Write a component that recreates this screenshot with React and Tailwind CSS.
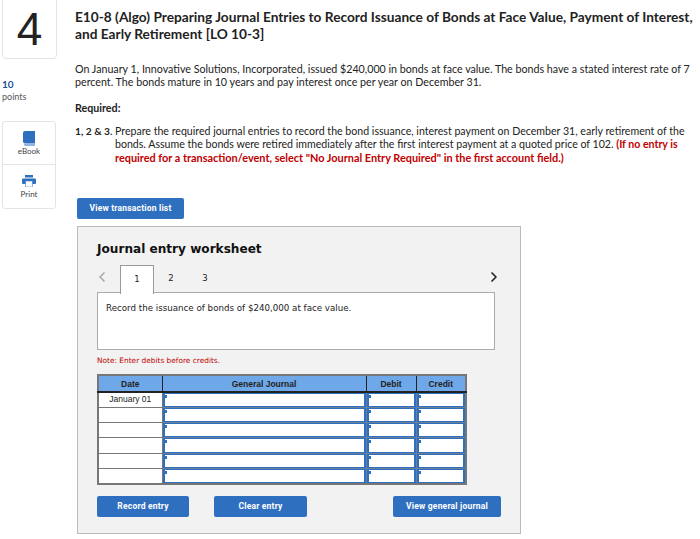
import React from 'react';
import { ChevronLeft, ChevronRight } from 'lucide-react';

const body = "font-['Lato','Open_Sans',sans-serif]";
const verdana = "font-['DejaVu_Sans',sans-serif]";

// ── Small blue action button ──────────────────────────────────────────────────
const ActionButton = ({ width, children }) => (
  <button className={`block ${width} h-[21px] bg-[#2f6fbf] rounded-[2px] text-white text-[8.5px] tracking-[0.2px] font-bold font-['Roboto',sans-serif]`}>
    {children}
  </button>
);

// ── Entry cell with corner marker ─────────────────────────────────────────────
const EntryCell = () => (
  <td className="relative p-0 bg-white border border-[#6b7f99] shadow-[inset_2px_0_0_#2f6fbf,inset_-2px_0_0_#2f6fbf,inset_0_1px_0_#2f6fbf,inset_0_-1px_0_#2f6fbf]">
    <span className="absolute left-[1px] top-[2px] w-[3px] h-[3px] bg-[#2f6fbf]" />
  </td>
);

const rows = [
  { date: 'January 01', height: 'h-[15px]' },
  { date: '', height: 'h-[15px]' },
  { date: '', height: 'h-[15px]' },
  { date: '', height: 'h-[16px]' },
  { date: '', height: 'h-[15px]' },
  { date: '', height: 'h-[16px]' },
];

const App = () => {
  return (
    <div className={`flex w-[700px] h-[539px] overflow-hidden bg-white text-[#222] ${body}`}>
      {/* ── Left rail ── */}
      <div className="w-[75px] shrink-0 pl-[2px]">
        <div className="w-[55px] h-[60px] -mt-[1px] border border-[#e4e4e4] rounded-b-[4px] flex items-center justify-center text-[#222] text-[46px] leading-none font-['Liberation_Sans',sans-serif]">
          4
        </div>
        <p className="mt-[19px] text-[10px] leading-[12px] font-bold text-[#1d4f91]">10</p>
        <p className="text-[9px] leading-[12px] text-[#555] mt-[1px]">points</p>
        <div className="mt-[18px] w-[54px] border border-[#e4e4e4] rounded-[3px]">
          <div className="h-[43px] flex flex-col items-center pt-[9px] border-b border-[#e4e4e4]">
            <svg width="12" height="15" viewBox="0 0 12 15">
              <path d="M2 0h10v12.5H2a2 2 0 0 1-2-2V2a2 2 0 0 1 2-2z" fill="#2f6fbf" />
              <path d="M1 13h11v2H2.5A1.5 1.5 0 0 1 1 13.5z" fill="#8fb5e3" />
            </svg>
            <span className="text-[8px] leading-[10px] text-[#444]">eBook</span>
          </div>
          <div className="h-[43px] flex flex-col items-center pt-[10px]">
            <svg width="14" height="12" viewBox="0 0 14 12">
              <rect x="3" y="0" width="8" height="2.5" fill="#2f6fbf" />
              <rect x="0" y="3.5" width="14" height="5.5" rx="1" fill="#2f6fbf" />
              <rect x="3.5" y="6" width="7" height="6" fill="#fff" stroke="#2f6fbf" strokeWidth="0.5" />
            </svg>
            <span className="text-[8px] leading-[10px] mt-[2px] text-[#444]">Print</span>
          </div>
        </div>
      </div>

      {/* ── Main content ── */}
      <div className="w-[625px] shrink-0">
        <h1 className="mt-[8px] w-[640px] text-[13.7px] leading-[17px] font-bold whitespace-nowrap text-[#222]">
          E10-8 (Algo) Preparing Journal Entries to Record Issuance of Bonds at Face Value, Payment of Interest,
          <br />
          and Early Retirement [LO 10-3]
        </h1>
        <p className="mt-[20px] text-[10.7px] leading-[13px] whitespace-nowrap">
          On January 1, Innovative Solutions, Incorporated, issued $240,000 in bonds at face value. The bonds have a stated interest rate of 7
          <br />
          percent. The bonds mature in 10 years and pay interest once per year on December 31.
        </p>
        <p className="mt-[13px] text-[10.7px] leading-[13px] font-bold">Required:</p>
        <div className="mt-[11px] flex text-[10.6px] leading-[13px]">
          <span className="w-[40px] shrink-0 font-bold whitespace-nowrap text-[10.2px]">1, 2 &amp; 3.</span>
          <p className="whitespace-nowrap">
            Prepare the required journal entries to record the bond issuance, interest payment on December 31, early retirement of the
            <br />
            bonds. Assume the bonds were retired immediately after the first interest payment at a quoted price of 102.{' '}
            <span className="font-bold text-[#c00000]">(If no entry is</span>
            <br />
            <span className="font-bold text-[#c00000] text-[10.9px]">required for a transaction/event, select "No Journal Entry Required" in the first account field.)</span>
          </p>
        </div>

        <div className="mt-[33px] ml-[2px]">
          <ActionButton width="w-[107px]">View transaction list</ActionButton>
        </div>

        {/* ── Worksheet ── */}
        <div className={`mt-[7px] ml-[2px] w-[444px] h-[308px] bg-[#f2f2f2] border border-[#bbb] px-[19px] ${verdana}`}>
          <h2 className="mt-[14px] text-[12.1px] leading-[16px] font-bold text-[#111]">Journal entry worksheet</h2>
          <div className="mt-[7px] h-[28px] w-[398px] flex items-center relative">
            <ChevronLeft size={16} strokeWidth={2.5} className="text-[#aaa] ml-[-3px] mb-[3px]" />
            <div className="ml-[10px] w-[34px] h-[29px] bg-white border border-b-0 border-[#999] flex items-center justify-center text-[8.5px] relative top-[1px] z-10">1</div>
            <span className="w-[34px] text-center text-[8.5px]">2</span>
            <span className="w-[34px] text-center text-[8.5px]">3</span>
            <ChevronRight size={16} strokeWidth={2.5} className="text-[#222] ml-auto mr-[-7px] mb-[3px]" />
          </div>
          <div className="w-[398px] h-[58px] bg-white border border-[#aaa] px-[8px] pt-[8px] text-[8.7px] leading-[14px] text-[#222]">
            Record the issuance of bonds of $240,000 at face value.
          </div>
          <p className="mt-[6px] text-[7.4px] leading-[10px] text-[#c00000]">Note: Enter debits before credits.</p>

          <table className="mt-[8px] w-[368px] table-fixed border-collapse border-2 border-[#777] font-['Liberation_Sans',sans-serif]">
            <colgroup>
              <col className="w-[64px]" />
              <col className="w-[204px]" />
              <col className="w-[50px]" />
              <col className="w-[50px]" />
            </colgroup>
            <thead>
              <tr className="h-[17px] bg-[#6fa8e8] text-[8.5px] font-bold text-[#222]">
                {['Date', 'General Journal', 'Debit', 'Credit'].map((h) => (
                  <th key={h} className="p-0 pt-[1px] font-bold border border-[#222] border-b-2">{h}</th>
                ))}
              </tr>
            </thead>
            <tbody>
              {rows.map((row, i) => (
                <tr key={i} className={row.height}>
                  <td className="p-0 bg-white border border-[#777] text-center text-[8.5px]">{row.date}</td>
                  <EntryCell />
                  <EntryCell />
                  <EntryCell />
                </tr>
              ))}
            </tbody>
          </table>

          <div className="mt-[11px] w-[404px] flex items-start">
            <ActionButton width="w-[92px]">Record entry</ActionButton>
            <div className="ml-[25px]">
              <ActionButton width="w-[93px]">Clear entry</ActionButton>
            </div>
            <div className="ml-auto">
              <ActionButton width="w-[108px]">View general journal</ActionButton>
            </div>
          </div>
        </div>
      </div>
    </div>
  );
};

export default App;
